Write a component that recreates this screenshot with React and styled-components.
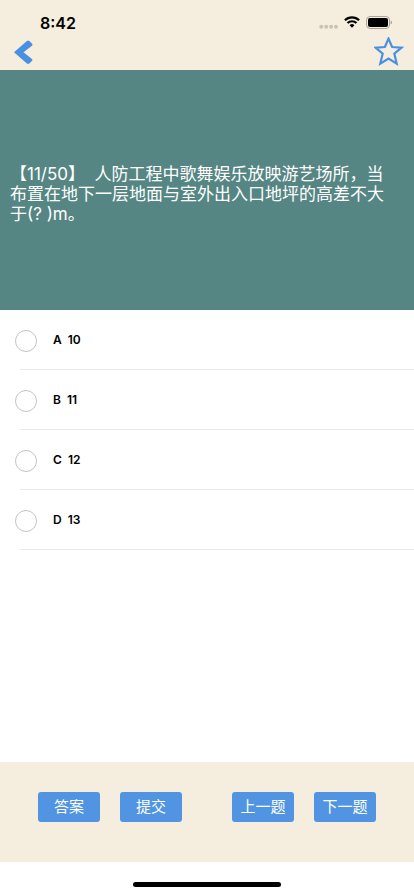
import React from 'react'
import styled, { createGlobalStyle } from 'styled-components'

const blue = '#4a90e2'
const cream = '#f5eddd'

const GlobalStyle = createGlobalStyle`
  * {
    box-sizing: border-box;
  }

  body {
    margin: 0;
    background: #fff;
    font-family: Inter, "Noto Sans CJK SC", sans-serif;
  }

  button {
    font-family: inherit;
  }
`

const Screen = styled.div`
  display: flex;
  flex-direction: column;
  min-height: 100vh;
`

const Header = styled.header`
  background: ${cream};
`

const StatusBar = styled.div`
  display: flex;
  align-items: center;
  justify-content: space-between;
  height: 34px;
  padding: 12px 22px 0 40px;
`

const Time = styled.span`
  font-size: 16px;
  font-weight: 600;
  line-height: 20px;
`

const StatusIcons = styled.div`
  display: flex;
  align-items: center;
  gap: 6px;
  padding-bottom: 2px;
`

const NavBar = styled.nav`
  display: flex;
  align-items: center;
  justify-content: space-between;
  height: 36px;
  padding: 0 10px 0 13px;
`

const IconButton = styled.button`
  display: flex;
  padding: 0;
  border: 0;
  background: none;
  cursor: pointer;
`

const Question = styled.section`
  display: flex;
  align-items: center;
  min-height: 240px;
  padding: 8px 16px 0 10px;
  background: #568683;
`

const QuestionText = styled.p`
  margin: 0;
  color: #fff;
  font-size: 17px;
  font-weight: 400;
  line-height: 20px;
`

const Options = styled.main`
  flex: 1;
`

const Option = styled.label`
  display: flex;
  align-items: center;
  height: 60px;
  padding-left: 15px;
  background: linear-gradient(#ebebeb, #ebebeb) 20px 100% / 100% 1px no-repeat;
  cursor: pointer;
`

const Radio = styled.input`
  appearance: none;
  width: 22px;
  height: 22px;
  margin: 2px 16px 0 0;
  border: 1px solid #c4c4c6;
  border-radius: 50%;

  &:checked {
    border: 6px solid ${blue};
  }
`

const OptionText = styled.span`
  color: #000;
  font-size: 12px;
  font-weight: 600;
  line-height: 16px;
  white-space: pre;
`

const Footer = styled.footer`
  display: flex;
  justify-content: center;
  gap: 50px;
  height: 100px;
  padding-top: 30px;
  background: ${cream};
`

const ButtonGroup = styled.div`
  display: flex;
  gap: 20px;
`

const Button = styled.button`
  width: 62px;
  height: 30px;
  padding: 0;
  border: 0;
  border-radius: 3px;
  background: #5195e2;
  color: #fff;
  font-size: 15px;
  font-weight: 400;
  line-height: 30px;
  cursor: pointer;
`

const HomeArea = styled.div`
  display: flex;
  justify-content: center;
  align-items: flex-end;
  height: 34px;
  padding-bottom: 9px;
`

const HomeIndicator = styled.div`
  width: 148px;
  height: 5px;
  border-radius: 3px;
  background: #000;
`

const SignalIcon = () => (
  <svg width="19" height="14" viewBox="0 0 19 14" fill="#c9c3b7">
    <circle cx="2.3" cy="11.8" r="2" />
    <circle cx="7.2" cy="11.8" r="2" />
    <circle cx="12.1" cy="11.8" r="2" />
    <circle cx="17" cy="11.8" r="2" />
  </svg>
)

const WifiIcon = () => (
  <svg width="16" height="12" viewBox="0 0 16 12">
    <g fill="none" stroke="#000" strokeWidth="2.1">
      <path d="M0.9 4.3a10.1 10.1 0 0 1 14.2 0" />
      <path d="M3.5 7.1a6.4 6.4 0 0 1 9 0" />
    </g>
    <path d="M5.6 9.3a3.4 3.4 0 0 1 4.8 0L8 11.8z" />
  </svg>
)

const BatteryIcon = () => (
  <svg width="26" height="13" viewBox="0 0 26 13">
    <rect x="0.5" y="0.5" width="23" height="12" rx="3.6" fill="none" stroke="#aaa498" />
    <rect x="2" y="2" width="20" height="9" rx="2" />
    <path d="M24.7 4.5v4a2.2 2.2 0 0 0 0-4z" fill="#9f9a90" />
  </svg>
)

const BackIcon = () => (
  <svg width="20" height="24" viewBox="0 0 20 24" fill={blue}>
    <path d="M1 12.2 14.2 .8h1.9l3.3 3.2-.1 1.4-8.8 6.8 8.8 7 .1 1.3-3.3 3.2h-1.9z" />
  </svg>
)

const StarIcon = () => (
  <svg width="30" height="30" viewBox="0 1 30 30" fill="none" stroke={blue} strokeWidth="2.2">
    <path d="M14.5 2.6 18.1 11 27.4 11.7 20.3 17.6 22.7 27.6 14.5 22.6 6.3 27.6 8.7 17.6 1.6 11.7 10.9 11z" />
  </svg>
)

const options = [
  { key: 'A', text: '10' },
  { key: 'B', text: '11' },
  { key: 'C', text: '12' },
  { key: 'D', text: '13' },
]

class App extends React.Component {
  state = {
    selected: null,
  }

  handleOnChange = (event) => {
    this.setState({ selected: event.target.value })
  }

  render() {
    const { selected } = this.state

    return (
      <Screen lang="zh-CN">
        <GlobalStyle />
        <Header>
          <StatusBar>
            <Time>8:42</Time>
            <StatusIcons>
              <SignalIcon />
              <WifiIcon />
              <BatteryIcon />
            </StatusIcons>
          </StatusBar>
          <NavBar>
            <IconButton type="button" aria-label="返回">
              <BackIcon />
            </IconButton>
            <IconButton type="button" aria-label="收藏">
              <StarIcon />
            </IconButton>
          </NavBar>
        </Header>
        <Question>
          <QuestionText>
            【11/50】&nbsp;&nbsp;人防工程中歌舞娱乐放映游艺场所，当布置在地下一层地面与室外出入口地坪的高差不大于(? )m。
          </QuestionText>
        </Question>
        <Options>
          {options.map(({ key, text }) => (
            <Option key={key}>
              <Radio
                type="radio"
                name="answer"
                value={key}
                checked={selected === key}
                onChange={this.handleOnChange}
              />
              <OptionText>{`${key}  ${text}`}</OptionText>
            </Option>
          ))}
        </Options>
        <Footer>
          <ButtonGroup>
            <Button type="button">答案</Button>
            <Button type="button">提交</Button>
          </ButtonGroup>
          <ButtonGroup>
            <Button type="button">上一题</Button>
            <Button type="button">下一题</Button>
          </ButtonGroup>
        </Footer>
        <HomeArea>
          <HomeIndicator />
        </HomeArea>
      </Screen>
    )
  }
}

export default App
